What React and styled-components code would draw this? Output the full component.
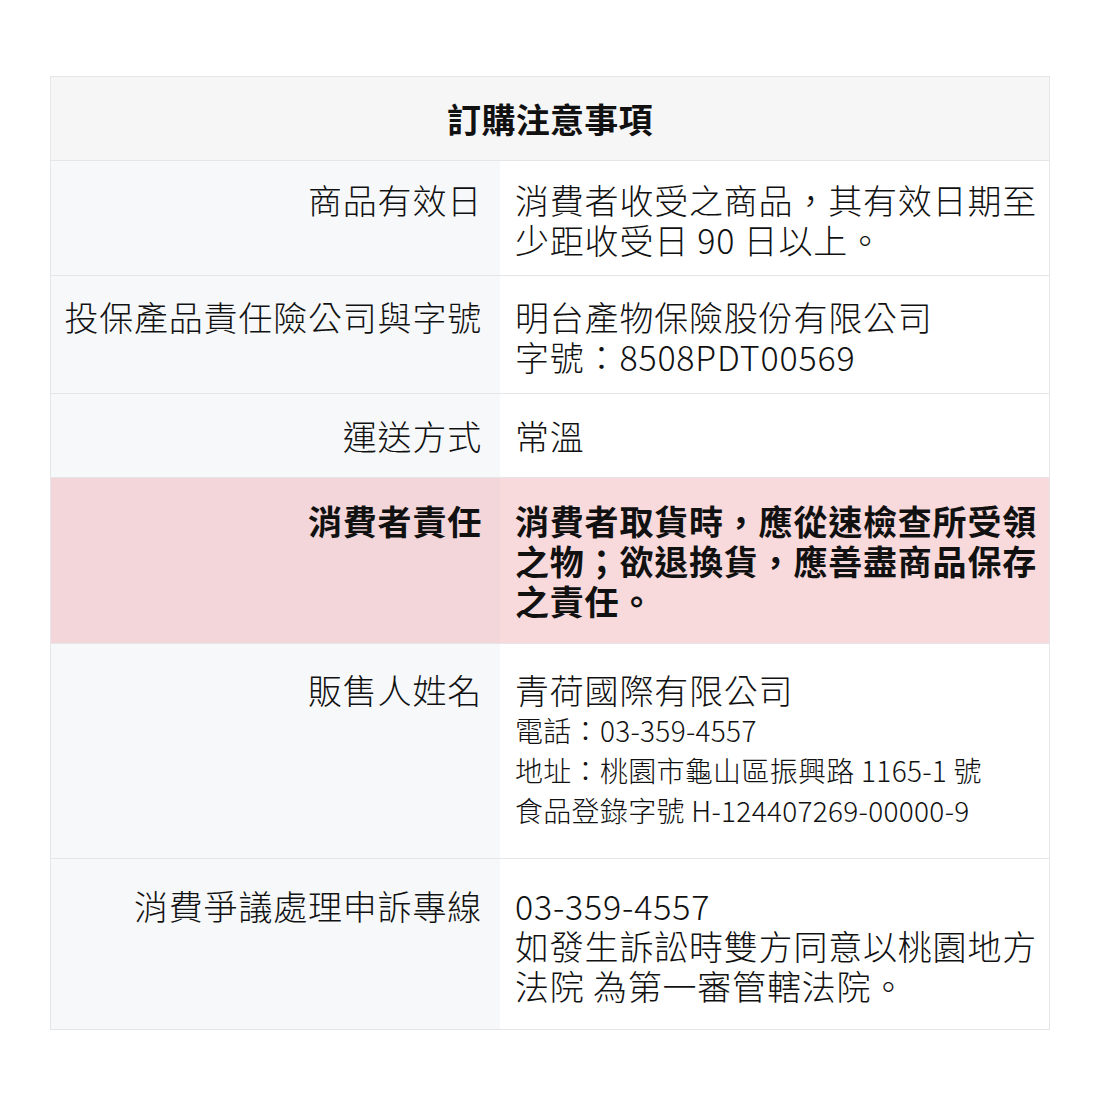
import React from "react";
import styled, { createGlobalStyle } from "styled-components";

const Global = createGlobalStyle`
  html, body { margin: 0; padding: 0; background: #ffffff; }
  body {
    font-family: "Noto Sans CJK TC", "Noto Sans CJK SC", "Noto Sans", sans-serif;
    color: #111;
  }
`;

const Table = styled.div`
  box-sizing: border-box;
  width: 1000px;
  margin: 76px 0 0 50px;
  border: 1px solid #e6e6e8;
`;

const Header = styled.div`
  height: 83px;
  background: #f6f6f7;
  display: flex;
  align-items: center;
  justify-content: center;
  font-size: 34px;
  font-weight: 700;
  letter-spacing: 0.3px;
`;

const Row = styled.div`
  display: grid;
  grid-template-columns: 449px 1fr;
  border-top: 1px solid #e6e6e8;
`;

const Label = styled.div`
  background: ${(p) => (p.$alert ? "#f2d6d9" : "#f7f8fa")};
  text-align: right;
  padding: ${(p) => p.$pt}px 18px ${(p) => p.$pb}px 8px;
  font-size: 34px;
  line-height: 40px;
  font-weight: ${(p) => (p.$alert ? 700 : 300)};
  letter-spacing: 0.8px;
  white-space: nowrap;
`;

const Value = styled.div`
  background: ${(p) => (p.$alert ? "#f8dadc" : "#ffffff")};
  padding: ${(p) => p.$pt}px 6px ${(p) => p.$pb}px 15px;
  font-size: 34px;
  line-height: 40px;
  font-weight: ${(p) => (p.$alert ? 700 : 300)};
  letter-spacing: 0.8px;
`;

const Line = styled.div``;

const Small = styled.div`
  font-size: 28px;
  line-height: 40px;
  letter-spacing: 0.3px;
`;

const rows = [
  {
    label: "商品有效日",
    pt: 19,
    pb: 15,
    value: [<Line key="a">消費者收受之商品，其有效日期至少距收受日 90 日以上。</Line>],
  },
  {
    label: "投保產品責任險公司與字號",
    pt: 21,
    pb: 16,
    value: [
      <Line key="a">明台產物保險股份有限公司</Line>,
      <Line key="b">字號：8508PDT00569</Line>,
    ],
  },
  {
    label: "運送方式",
    pt: 22,
    pb: 21,
    value: [<Line key="a">常溫</Line>],
  },
  {
    label: "消費者責任",
    alert: true,
    pt: 23,
    pb: 22,
    value: [
      <Line key="a">消費者取貨時，應從速檢查所受領之物；欲退換貨，應善盡商品保存之責任。</Line>,
    ],
  },
  {
    label: "販售人姓名",
    pt: 26,
    pb: 28,
    value: [
      <Line key="a">青荷國際有限公司</Line>,
      <Small key="b">電話：03-359-4557</Small>,
      <Small key="c">地址：桃園市龜山區振興路 1165-1 號</Small>,
      <Small key="d">食品登錄字號 H-124407269-00000-9</Small>,
    ],
  },
  {
    label: "消費爭議處理申訴專線",
    pt: 27,
    pb: 23,
    value: [
      <Line key="a">03-359-4557</Line>,
      <Line key="b">如發生訴訟時雙方同意以桃園地方法院 為第一審管轄法院。</Line>,
    ],
  },
];

export default function App() {
  return (
    <>
      <Global />
      <Table>
        <Header>訂購注意事項</Header>
        {rows.map((r) => (
          <Row key={r.label}>
            <Label $alert={r.alert} $pt={r.pt} $pb={r.pb}>
              {r.label}
            </Label>
            <Value $alert={r.alert} $pt={r.pt} $pb={r.pb}>
              {r.value}
            </Value>
          </Row>
        ))}
      </Table>
    </>
  );
}
